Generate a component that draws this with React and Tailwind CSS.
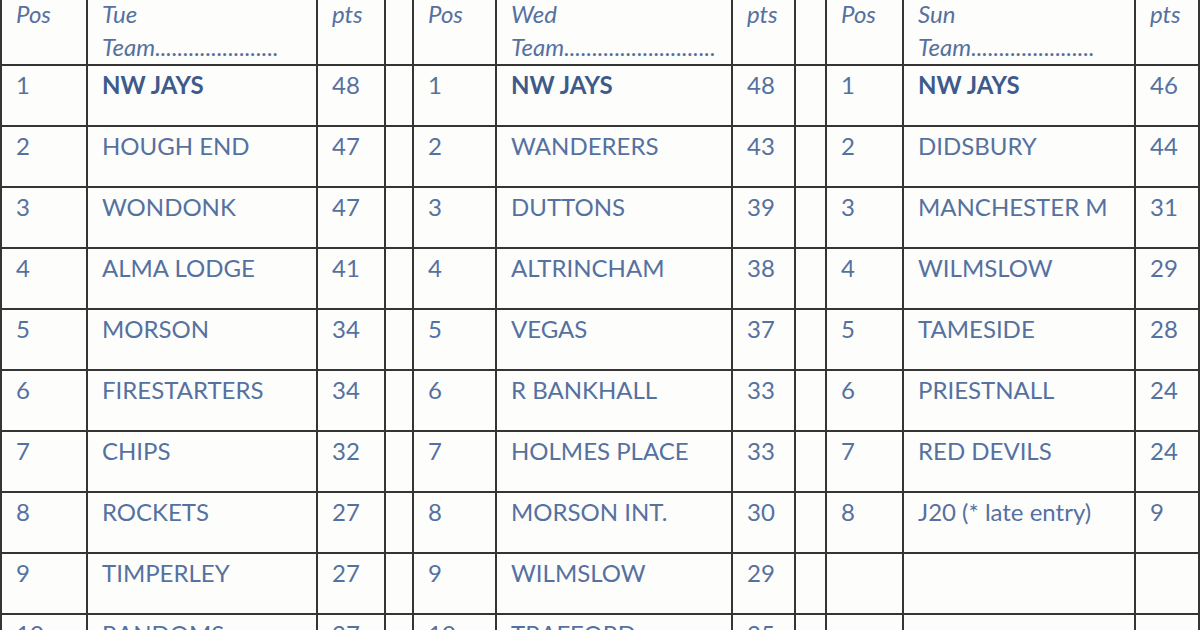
const tue = [
  ["1", "NW JAYS", "48"],
  ["2", "HOUGH END", "47"],
  ["3", "WONDONK", "47"],
  ["4", "ALMA LODGE", "41"],
  ["5", "MORSON", "34"],
  ["6", "FIRESTARTERS", "34"],
  ["7", "CHIPS", "32"],
  ["8", "ROCKETS", "27"],
  ["9", "TIMPERLEY", "27"],
  ["10", "RANDOMS", "27"],
];

const wed = [
  ["1", "NW JAYS", "48"],
  ["2", "WANDERERS", "43"],
  ["3", "DUTTONS", "39"],
  ["4", "ALTRINCHAM", "38"],
  ["5", "VEGAS", "37"],
  ["6", "R BANKHALL", "33"],
  ["7", "HOLMES PLACE", "33"],
  ["8", "MORSON INT.", "30"],
  ["9", "WILMSLOW", "29"],
  ["10", "TRAFFORD", "25"],
];

const sun = [
  ["1", "NW JAYS", "46"],
  ["2", "DIDSBURY", "44"],
  ["3", "MANCHESTER M", "31"],
  ["4", "WILMSLOW", "29"],
  ["5", "TAMESIDE", "28"],
  ["6", "PRIESTNALL", "24"],
  ["7", "RED DEVILS", "24"],
  ["8", "J20 (* late entry)", "9"],
  ["", "", ""],
  ["", "", ""],
];

function Cell({ children, bold }) {
  return (
    <div
      className={
        "bg-[#fdfdfc] pl-[14px] pt-[4px] text-[24px] leading-[30px] whitespace-nowrap overflow-hidden " +
        (bold ? "font-bold text-[#3e5a8b]" : "text-[#5571a0]")
      }
    >
      {children}
    </div>
  );
}

function Head({ children }) {
  return (
    <div className="bg-[#fdfdfc] pl-[14px] text-[24px] leading-[33px] italic text-[#5571a0] whitespace-nowrap overflow-hidden">
      <div className="-mt-[3px]">{children}</div>
    </div>
  );
}

function Blank() {
  return <div className="bg-[#fdfdfc]" />;
}

export default function App() {
  return (
    <div className="h-[630px] w-[1200px] overflow-hidden bg-[#fdfdfc] font-['Lato','Open_Sans',sans-serif]">
      <div className="grid grid-cols-[84px_228px_66px_26px_81px_234px_61px_29px_75px_230px_62px] grid-rows-[64px_repeat(10,59px)] gap-[2px] bg-[#353535] px-[2px] pb-[2px]">
        <Head>Pos</Head>
        <Head>
          <div>Tue</div>
          <div>Team......................</div>
        </Head>
        <Head>pts</Head>
        <Blank />
        <Head>Pos</Head>
        <Head>
          <div>Wed</div>
          <div>Team...........................</div>
        </Head>
        <Head>pts</Head>
        <Blank />
        <Head>Pos</Head>
        <Head>
          <div>Sun</div>
          <div>Team......................</div>
        </Head>
        <Head>pts</Head>

        {tue.map((row, i) => (
          <div key={i} className="contents">
            <Cell>{row[0]}</Cell>
            <Cell bold={i === 0}>{row[1]}</Cell>
            <Cell>{row[2]}</Cell>
            <Blank />
            <Cell>{wed[i][0]}</Cell>
            <Cell bold={i === 0}>{wed[i][1]}</Cell>
            <Cell>{wed[i][2]}</Cell>
            <Blank />
            <Cell>{sun[i][0]}</Cell>
            <Cell bold={i === 0}>{sun[i][1]}</Cell>
            <Cell>{sun[i][2]}</Cell>
          </div>
        ))}
      </div>
    </div>
  );
}
